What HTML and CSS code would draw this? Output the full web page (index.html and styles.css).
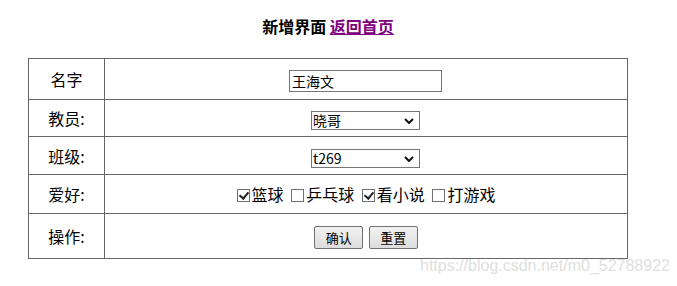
FILE: index.html
```html
<!DOCTYPE html>
<html lang="zh">
<head>
    <meta charset="UTF-8">
    <title>新增界面</title>
    <link rel="stylesheet" href="styles.css">
</head>
<body>
    <div class="wrap">
        <h3 class="title">新增界面 <a href="#" class="back">返回首页</a></h3>
        <form>
            <table class="form-table">
                <tr class="row-name">
                    <td class="label">名字</td>
                    <td><input type="text" class="text" value="王海文"></td>
                </tr>
                <tr class="row-teacher">
                    <td class="label">教员:</td>
                    <td>
                        <span class="pick-box">
                            <select class="pick">
                                <option>晓哥</option>
                            </select>
                            <svg class="arrow" width="10" height="6" viewBox="0 0 10 6"><path d="M1 1 L5 5 L9 1" fill="none" stroke="#111" stroke-width="2"/></svg>
                        </span>
                    </td>
                </tr>
                <tr class="row-class">
                    <td class="label">班级:</td>
                    <td>
                        <span class="pick-box">
                            <select class="pick">
                                <option>t269</option>
                            </select>
                            <svg class="arrow" width="10" height="6" viewBox="0 0 10 6"><path d="M1 1 L5 5 L9 1" fill="none" stroke="#111" stroke-width="2"/></svg>
                        </span>
                    </td>
                </tr>
                <tr class="row-hobby">
                    <td class="label">爱好:</td>
                    <td class="hobbies">
                        <label><input type="checkbox" checked>篮球</label>
                        <label><input type="checkbox">乒乓球</label>
                        <label><input type="checkbox" checked>看小说</label>
                        <label><input type="checkbox">打游戏</label>
                    </td>
                </tr>
                <tr class="row-ops">
                    <td class="label">操作:</td>
                    <td>
                        <button type="button" class="btn">确认</button>
                        <button type="reset" class="btn">重置</button>
                    </td>
                </tr>
            </table>
        </form>
    </div>
    <div class="mark">https://blog.csdn.net/m0_52788922</div>
</body>
</html>
```

FILE: styles.css
```css
* {
    box-sizing: border-box;
}

body {
    margin: 0;
    padding: 0;
    font-family: "Noto Sans CJK SC", "Liberation Sans", sans-serif;
    color: #000;
    background: #fff;
    position: relative;
    height: 286px;
}

.wrap {
    width: 600px;
    margin-left: 28px;
}

.title {
    margin: 0;
    padding-top: 15px;
    height: 58px;
    text-align: center;
    font-size: 16px;
    line-height: 22px;
    font-weight: bold;
}

.back {
    color: #800080;
}

.form-table {
    width: 600px;
    border-collapse: collapse;
    border: 1px solid #666;
}

.form-table td {
    border: 1px solid #666;
    text-align: center;
    padding: 0;
    font-size: 16px;
}

.form-table td.label {
    width: 76px;
}

.row-name td { height: 41px; }
.row-teacher td { height: 37px; }
.row-class td { height: 38px; }
.row-hobby td { height: 39px; }
.row-ops td { height: 45px; }

.text {
    width: 153px;
    height: 22px;
    border: 1px solid #767676;
    padding: 0 2px;
    font-family: "Noto Sans CJK SC", sans-serif;
    font-size: 14px;
    vertical-align: middle;
    margin-left: -1px;
}

.pick-box {
    display: inline-block;
    position: relative;
    vertical-align: middle;
    line-height: 0;
    margin-left: -1px;
}

.pick {
    appearance: none;
    -webkit-appearance: none;
    width: 109px;
    height: 19px;
    font-size: 14px;
    line-height: 17px;
    font-family: "Noto Sans CJK SC", sans-serif;
    color: #000;
    border: 1px solid #767676;
    border-radius: 0;
    background: #fff;
    padding: 0 0 0 1px;
    margin: 0;
}

.arrow {
    position: absolute;
    right: 6px;
    top: 7px;
    pointer-events: none;
}

.hobbies label {
    margin: 0 2px;
}

.hobbies input {
    appearance: none;
    -webkit-appearance: none;
    position: relative;
    width: 13px;
    height: 13px;
    margin: 0 2px 0 0;
    border: 1px solid #707070;
    background: #fff;
    vertical-align: -1px;
}

.hobbies input:checked::after {
    content: "";
    position: absolute;
    left: 3px;
    top: 0px;
    width: 4px;
    height: 7px;
    border-right: 2px solid #222;
    border-bottom: 2px solid #222;
    transform: rotate(40deg);
}

.btn {
    width: 49px;
    height: 23px;
    margin: 0 1px;
    font-size: 13px;
    font-family: "Noto Sans CJK SC", sans-serif;
    background: linear-gradient(#f2f2f2, #dddddd);
    border: 1px solid #707070;
    border-radius: 2px;
    padding: 0;
    vertical-align: middle;
}

.mark {
    position: absolute;
    left: 420px;
    top: 257px;
    font-family: "Liberation Sans", sans-serif;
    font-size: 16px;
    color: #e0e0e0;
}
```
